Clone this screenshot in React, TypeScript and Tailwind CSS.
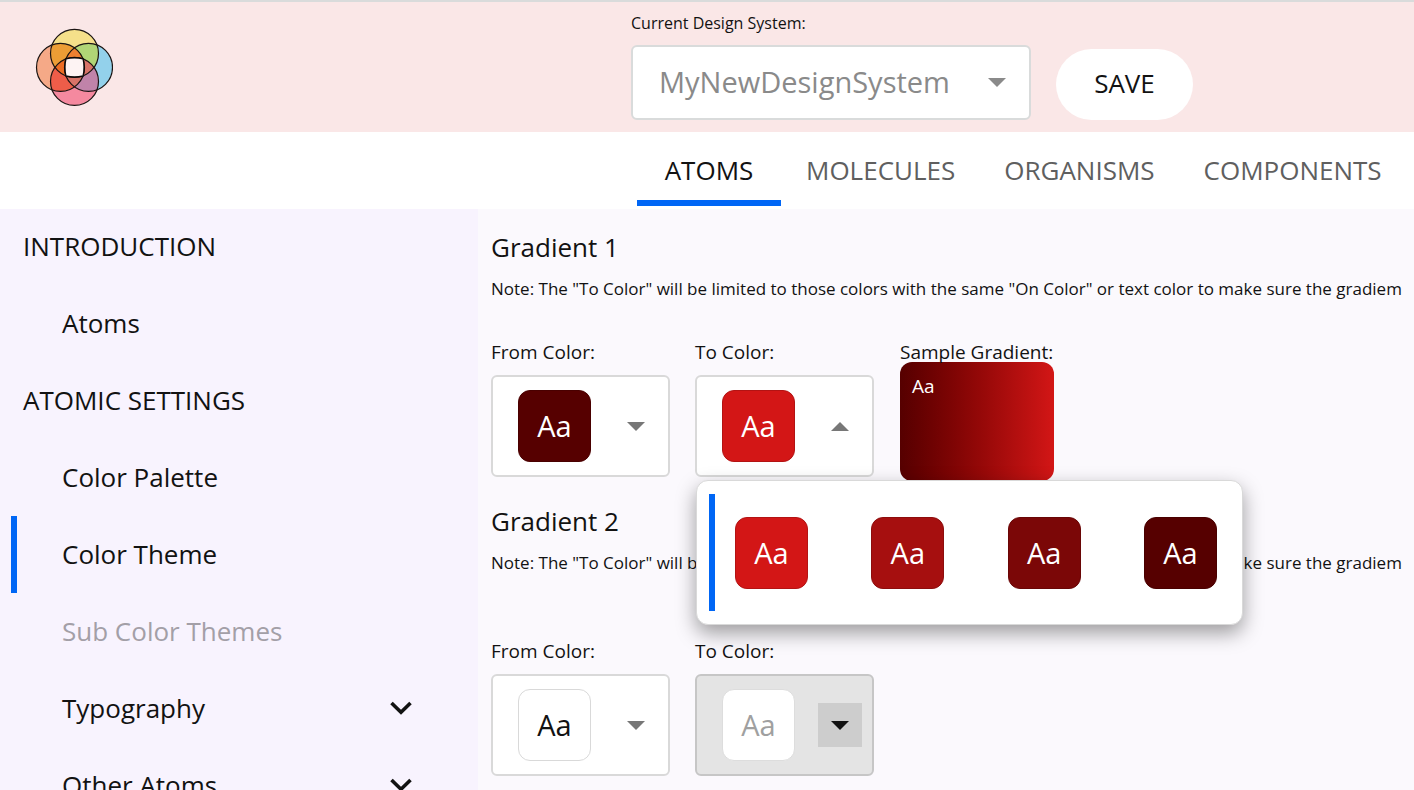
import React, { useState } from "react";

const tabs = ["ATOMS", "MOLECULES", "ORGANISMS", "COMPONENTS"];

const note =
  'Note: The "To Color" will be limited to those colors with the same "On Color" or text color to make sure the gradiem';

function Logo() {
  return (
    <svg viewBox="-0.5 -0.4 78 78" className="h-[78px] w-[78px]" role="img" aria-label="Atomic design logo">
      <defs>
        <clipPath id="top"><circle cx="39" cy="25" r="24" /></clipPath>
        <clipPath id="right"><circle cx="53" cy="39" r="24" /></clipPath>
        <clipPath id="bottom"><circle cx="39" cy="53" r="24" /></clipPath>
        <clipPath id="left"><circle cx="25" cy="39" r="24" /></clipPath>
      </defs>
      <circle cx="39" cy="25" r="24" fill="#f5e08a" />
      <circle cx="53" cy="39" r="24" fill="#93d1eb" />
      <circle cx="39" cy="53" r="24" fill="#f5899f" />
      <circle cx="25" cy="39" r="24" fill="#f5a987" />
      <g clipPath="url(#top)">
        <circle cx="25" cy="39" r="24" fill="#ec9d35" />
        <circle cx="53" cy="39" r="24" fill="#b0d576" />
      </g>
      <g clipPath="url(#bottom)">
        <circle cx="25" cy="39" r="24" fill="#ee5d49" />
        <circle cx="53" cy="39" r="24" fill="#c083a9" />
      </g>
      <g clipPath="url(#left)">
        <g clipPath="url(#right)">
          <circle cx="39" cy="53" r="24" fill="#d87368" />
          <circle cx="39" cy="25" r="24" fill="#ee8030" />
        </g>
      </g>
      <g clipPath="url(#top)">
        <g clipPath="url(#bottom)">
          <circle cx="25" cy="39" r="24" fill="#ec6c24" />
          <circle cx="53" cy="39" r="24" fill="#d87368" />
        </g>
      </g>
      <g fill="none" stroke="#1a1412" strokeWidth="1.2">
        <circle cx="39" cy="25" r="24" />
        <circle cx="53" cy="39" r="24" />
        <circle cx="39" cy="53" r="24" />
        <circle cx="25" cy="39" r="24" />
      </g>
      <path
        d="M30.4 30.4Q39 28.4 47.6 30.4Q49.6 39 47.6 47.6Q39 49.6 30.4 47.6Q28.4 39 30.4 30.4Z"
        fill="#fdf3f3"
        stroke="#0c0808"
        strokeWidth="1.4"
      />
    </svg>
  );
}

function Triangle({ up = false, className = "" }: { up?: boolean; className?: string }) {
  return (
    <svg viewBox="0 0 18 9" className={`h-[9px] w-[18px] ${className}`} aria-hidden="true">
      <path d={up ? "M0 9L9 0L18 9Z" : "M0 0H18L9 9Z"} fill="currentColor" />
    </svg>
  );
}

function Chevron() {
  return (
    <svg viewBox="0 0 22 14" className="h-[14px] w-[22px]" aria-hidden="true">
      <path d="M1.5 2L11 11.2L20.5 2" fill="none" stroke="currentColor" strokeWidth="3.6" />
    </svg>
  );
}

function Swatch({ color }: { color: string }) {
  return (
    <span
      className={`flex h-[72px] w-[73px] items-center justify-center rounded-xl border text-[29px] font-medium ${color}`}
    >
      Aa
    </span>
  );
}

function ColorPicker({
  id,
  label,
  color,
  open = false,
  disabled = false,
  onClick,
  children,
}: {
  id: string;
  label: string;
  color: string;
  open?: boolean;
  disabled?: boolean;
  onClick?: () => void;
  children?: React.ReactNode;
}) {
  return (
    <div className="relative w-[179px]">
      <label htmlFor={id} className="mb-[13px] block text-[19px] leading-5">
        {label}
      </label>
      <button
        id={id}
        type="button"
        disabled={disabled}
        aria-expanded={open}
        onClick={onClick}
        className={`flex h-[102px] w-full items-center justify-between rounded-md border-2 pr-[10px] pl-[25px] ${
          disabled ? "border-[#c6c6c6] bg-[#e4e4e4]" : "border-[#d9d9d9] bg-white"
        }`}
      >
        <Swatch color={color} />
        <span
          className={`flex h-11 w-11 items-center justify-center ${
            disabled ? "bg-[#cdcdcd] text-[#121212]" : "text-[#777777]"
          }`}
        >
          <Triangle up={open} />
        </span>
      </button>
      {children}
    </div>
  );
}

const reds = [
  { name: "Red 1", color: "bg-[#d31616] border-[#b31313] text-white" },
  { name: "Red 2", color: "bg-[#a60f0f] border-[#8d0d0d] text-white" },
  { name: "Red 3", color: "bg-[#7b0707] border-[#690606] text-white" },
  { name: "Red 4", color: "bg-[#560000] border-[#490000] text-white" },
];

function SideItem({
  label,
  active = false,
  muted = false,
  expandable = false,
}: {
  label: string;
  active?: boolean;
  muted?: boolean;
  expandable?: boolean;
}) {
  return (
    <li className="pl-[11px]">
      <a
        href="#"
        className={`flex h-[77px] items-center justify-between border-l-6 pr-[66px] pb-px pl-[45px] ${
          active ? "border-[#0066f5]" : "border-transparent"
        } ${muted ? "text-[#a39fa7]" : ""}`}
      >
        {label}
        {expandable && <Chevron />}
      </a>
    </li>
  );
}

function SideHeading({ children }: { children: React.ReactNode }) {
  return <h2 className="flex h-[77px] items-center pb-px pl-[23px]">{children}</h2>;
}

export default function App() {
  const [open, setOpen] = useState(true);
  const [picked, setPicked] = useState(0);

  return (
    <div className="flex h-screen flex-col overflow-hidden bg-white font-['Open_Sans',sans-serif] text-[#121212]">
      <header className="flex h-[132px] shrink-0 border-t-2 border-[#d9dbdb] bg-[#fae7e7]">
        <div className="w-[631px] shrink-0 pt-[26px] pl-[35px]">
          <Logo />
        </div>
        <div className="w-[400px] shrink-0 pt-[9px]">
          <label htmlFor="system" className="block text-base leading-6">
            Current Design System:
          </label>
          <div className="relative mt-[10px]">
            <select
              id="system"
              className="h-[75px] w-full appearance-none rounded-md border-2 border-[#d9dbdb] bg-white px-[26px] pb-0.5 text-[29px] text-[#8a8a8a]"
            >
              <option>MyNewDesignSystem</option>
            </select>
            <Triangle className="pointer-events-none absolute top-[33px] right-[25px] text-[#8a8a8a]" />
          </div>
        </div>
        <button
          type="button"
          className="mt-[47px] ml-[25px] h-[71px] w-[137px] rounded-full bg-white pb-0.5 text-[26px]"
        >
          SAVE
        </button>
      </header>

      <nav className="flex h-[77px] shrink-0 gap-px pb-[3px] pl-[637px] text-[26px]" aria-label="Sections">
        {tabs.map((tab, i) => (
          <a
            key={tab}
            href="#"
            className={`flex min-w-[144px] shrink-0 items-center justify-center border-b-6 px-6 pt-[9px] ${
              i === 0 ? "border-[#0066f5] text-[#121212]" : "border-transparent text-[#5f5f5f]"
            }`}
          >
            {tab}
          </a>
        ))}
      </nav>

      <div className="flex min-h-0 flex-1">
        <aside className="w-[478px] shrink-0 overflow-hidden bg-[#f8f3fe] text-[26px]">
          <div className="-mt-px">
            <SideHeading>INTRODUCTION</SideHeading>
            <ul>
              <SideItem label="Atoms" />
            </ul>
            <SideHeading>ATOMIC SETTINGS</SideHeading>
            <ul>
              <SideItem label="Color Palette" />
              <SideItem label="Color Theme" active />
              <SideItem label="Sub Color Themes" muted />
              <SideItem label="Typography" expandable />
              <SideItem label="Other Atoms" expandable />
            </ul>
          </div>
        </aside>

        <main className="min-w-0 flex-1 overflow-hidden bg-[#fbf9fd] pt-5 pl-[13px]">
          <section>
            <h3 className="text-[26px] leading-9">Gradient 1</h3>
            <p className="mt-3 text-[17px] leading-6 whitespace-nowrap">{note}</p>
            <div className="mt-[41px] flex gap-[25px]">
              <ColorPicker id="from-1" label="From Color:" color="bg-[#560000] border-[#490000] text-white" />
              <ColorPicker
                id="to-1"
                label="To Color:"
                color={reds[picked].color}
                open={open}
                onClick={() => setOpen(!open)}
              >
                {open && (
                  <ul className="absolute top-[138px] left-px z-10 flex h-[145px] w-[547px] justify-between rounded-xl border border-[#d9d9d9] bg-white py-[13px] pr-[25px] pl-3 shadow-[0_8px_20px_rgba(0,0,0,0.38)]">
                    {reds.map((red, i) => (
                      <li
                        key={red.name}
                        className={`flex items-center ${i === picked ? "border-l-6 border-[#0066f5] pl-5" : ""}`}
                      >
                        <button
                          type="button"
                          aria-label={red.name}
                          onClick={() => {
                            setPicked(i);
                            setOpen(false);
                          }}
                        >
                          <Swatch color={red.color} />
                        </button>
                      </li>
                    ))}
                  </ul>
                )}
              </ColorPicker>
              <div className="h-[139px] w-[155px] pl-px">
                <p className="text-[19px] leading-5 whitespace-nowrap">Sample Gradient:</p>
                <div className="h-[119px] rounded-xl bg-linear-to-r from-[#560000] to-[#d31616] px-3 py-[10px] text-[19px] leading-7 font-medium text-white">
                  Aa
                </div>
              </div>
            </div>
          </section>

          <section className="mt-[22px]">
            <h3 className="text-[26px] leading-9">Gradient 2</h3>
            <p className="mt-3 text-[17px] leading-6 whitespace-nowrap">{note}</p>
            <div className="mt-[66px] flex gap-[25px]">
              <ColorPicker id="from-2" label="From Color:" color="bg-white border-[#d9d9d9] text-[#121212]" />
              <ColorPicker
                id="to-2"
                label="To Color:"
                color="bg-white border-[#dddddd] text-[#a0a0a0]"
                disabled
              />
            </div>
          </section>
        </main>
      </div>
    </div>
  );
}
